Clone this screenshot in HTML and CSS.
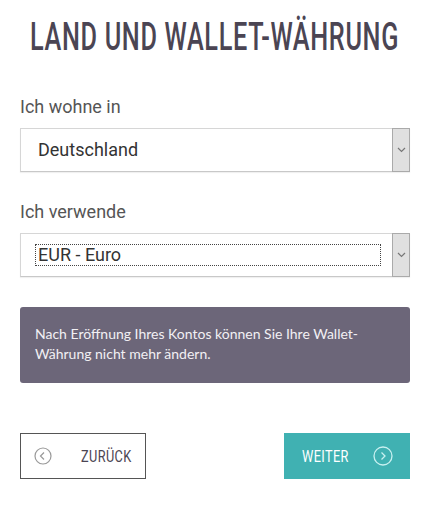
FILE: index.html
```html
<!DOCTYPE html>
<html lang="de">
<head>
<meta charset="utf-8">
<title>Land und Wallet-Währung</title>
<link rel="stylesheet" href="styles.css">
</head>
<body>
<main class="page">
  <h1 class="title"><span class="title-text">LAND UND WALLET-WÄHRUNG</span></h1>

  <div class="field">
    <label class="label">Ich wohne in</label>
    <div class="select">
      <span class="select-value">Deutschland</span>
      <span class="select-arrow"><svg width="9" height="6" viewBox="0 0 9 6"><path d="M1 1 L4.5 4.5 L8 1" fill="none" stroke="#777" stroke-width="1.2"/></svg></span>
    </div>
  </div>

  <div class="field">
    <label class="label">Ich verwende</label>
    <div class="select">
      <span class="select-value focused">EUR - Euro</span>
      <span class="select-arrow"><svg width="9" height="6" viewBox="0 0 9 6"><path d="M1 1 L4.5 4.5 L8 1" fill="none" stroke="#777" stroke-width="1.2"/></svg></span>
    </div>
  </div>

  <div class="notice">Nach Eröffnung Ihres Kontos können Sie Ihre Wallet-Währung nicht mehr ändern.</div>

  <div class="actions">
    <button class="btn btn-back">
      <svg class="btn-icon" width="18" height="18" viewBox="0 0 18 18"><circle cx="9" cy="9" r="8" fill="none" stroke="#999" stroke-width="1.2"/><path d="M10 5.5 L6.5 9 L10 12.5" fill="none" stroke="#999" stroke-width="1.2"/></svg>
      <span class="btn-text">ZURÜCK</span>
    </button>
    <button class="btn btn-next">
      <span class="btn-text">WEITER</span>
      <svg class="btn-icon" width="20" height="20" viewBox="0 0 20 20"><circle cx="10" cy="10" r="9" fill="none" stroke="#c8f0f0" stroke-width="1.3"/><path d="M8.5 6.5 L12 10 L8.5 13.5" fill="none" stroke="#c8f0f0" stroke-width="1.3"/></svg>
    </button>
  </div>
</main>
</body>
</html>
```

FILE: styles.css
```css
* { box-sizing: border-box; }

body {
  margin: 0;
  background: #fff;
  font-family: Roboto, "Noto Sans", sans-serif;
}

.page {
  width: 390px;
  margin-left: 20px;
  display: flex;
  flex-direction: column;
}

.title {
  margin: 17px 0 0;
  height: 41px;
  display: flex;
  justify-content: center;
  font-family: Roboto, sans-serif;
  font-weight: 500;
  font-size: 38px;
  line-height: 41px;
  color: #4b4553;
  white-space: nowrap;
}

.title-text {
  display: block;
  flex-shrink: 0;
  transform: scaleX(0.665);
  transform-origin: center center;
  letter-spacing: 1px;
}

.field {
  display: flex;
  flex-direction: column;
}

.field:first-of-type { margin-top: 37px; }
.field + .field { margin-top: 28px; }

.label {
  font-size: 18px;
  line-height: 24px;
  color: #555;
  margin-bottom: 9px;
}

.select {
  height: 44px;
  border: 1px solid #d6d6d6;
  border-bottom-color: #c8c8c8;
  box-shadow: 0 1px 1px rgba(0,0,0,0.06);
  display: flex;
  align-items: center;
  justify-content: space-between;
  padding-left: 14px;
  background: #fff;
}

.select-value {
  font-size: 18px;
  color: #333;
  padding: 1px 3px;
  flex: 1;
  margin-right: 11px;
  line-height: 20px;
}

.select-value.focused {
  outline: 1px dotted #444;
  outline-offset: -1px;
}

.select-arrow {
  width: 18px;
  height: 44px;
  margin-top: -1px;
  margin-bottom: -1px;
  margin-right: -1px;
  background: #e0e0e0;
  border: 1px solid #aaa;
  display: flex;
  align-items: center;
  justify-content: center;
}

.notice {
  margin-top: 30px;
  background: #6c6679;
  color: #f2f0f4;
  border-radius: 3px;
  padding: 17px 15px 19px;
  font-family: Lato, "Noto Sans", sans-serif;
  font-size: 14px;
  line-height: 20px;
}

.actions {
  margin-top: 50px;
  display: flex;
  justify-content: space-between;
}

.btn {
  width: 126px;
  height: 46px;
  display: flex;
  align-items: center;
  font-family: Roboto, sans-serif;
  font-size: 17px;
  cursor: pointer;
  padding: 0;
}

.btn-icon { flex-shrink: 0; }

.btn-text {
  display: inline-block;
  white-space: nowrap;
  transform: scaleX(0.75);
  transform-origin: left center;
  letter-spacing: 0.5px;
}

.btn-back {
  background: #fff;
  border: 1px solid #555;
  color: #4b4553;
  padding-left: 13px;
}

.btn-back .btn-text { margin-left: 29px; }

.btn-next {
  background: #40b1b2;
  border: none;
  color: #fff;
  padding-left: 18px;
}

.btn-next .btn-icon { margin-left: auto; margin-right: 17px; }
```
